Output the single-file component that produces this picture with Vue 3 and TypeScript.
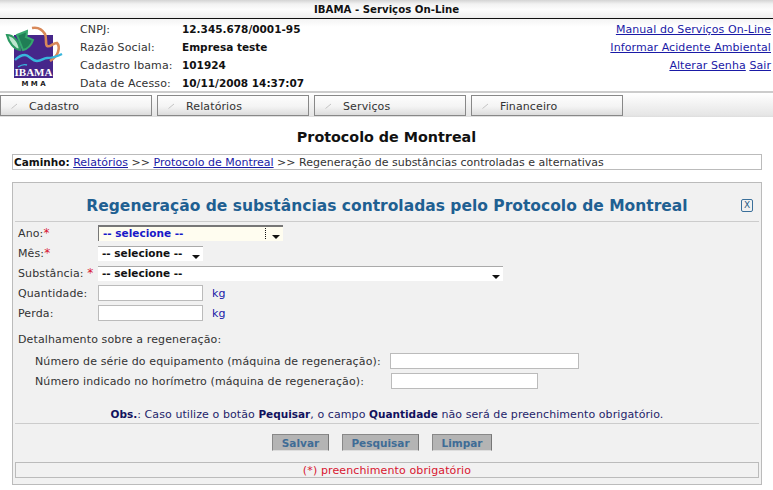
<script setup lang="ts">
const tabs = ['Cadastro', 'Relatórios', 'Serviços', 'Financeiro'];

const company = [
  { label: 'CNPJ:', value: '12.345.678/0001-95' },
  { label: 'Razão Social:', value: 'Empresa teste' },
  { label: 'Cadastro Ibama:', value: '101924' },
  { label: 'Data de Acesso:', value: '10/11/2008 14:37:07' },
];
</script>

<template>
  <div class="page">
    <div class="top-bar">IBAMA - Serviços On-Line</div>

    <!-- Header -->
    <div class="header">
      <svg class="logo" width="58" height="64" viewBox="0 0 58 64">
        <rect x="9" y="11" width="39" height="43" fill="#46268a" />
        <path d="M27 4c5-1 10 1 13 6 2 4 0 10 2 12 3 2 7-4 10-3 2 2 2 6 1 9-1 4-5 7-8 9" fill="none" stroke="#d8895a" stroke-width="2.6" />
        <path d="M2 11c6 0 12 6 13 15C9 25 4 19 2 11z" fill="#bfe6cf" stroke="#2c9a62" stroke-width="2.2" />
        <path d="M12 11l10-4c0 3 0 4-1 6l7 3c-2 6-6 9-10 10-2-5-4-10-6-15z" fill="#1f7d55" stroke="#35a86e" stroke-width="2" />
        <path d="M10 36c3-3 6-5 10-5 4 0 7 6 12 6s6-3 10-3 9-1 15-4" fill="none" stroke="#38b6dc" stroke-width="2.4" />
        <path d="M13 43c3-2 6-3 9-2" fill="none" stroke="#38b6dc" stroke-width="1.4" />
        <text x="28.5" y="52" class="logo-ibama" text-anchor="middle" textLength="38" lengthAdjust="spacingAndGlyphs">IBAMA</text>
        <text x="28.5" y="62" class="logo-mma" text-anchor="middle">M M A</text>
      </svg>

      <div class="company">
        <template v-for="row in company" :key="row.label">
          <span class="company-label">{{ row.label }}</span>
          <b class="company-value">{{ row.value }}</b>
        </template>
      </div>

      <div class="links">
        <a>Manual do Serviços On-Line</a>
        <a>Informar Acidente Ambiental</a>
        <div><a>Alterar Senha</a> <a>Sair</a></div>
      </div>
    </div>

    <!-- Menu -->
    <div class="menu">
      <div v-for="tab in tabs" :key="tab" class="tab">
        <svg class="tick" width="7" height="6" viewBox="0 0 7 6"><path d="M0.5 5.5L6 1" stroke="#c4c4c4" fill="none" /></svg>
        <span>{{ tab }}</span>
      </div>
    </div>

    <h1 class="page-title">Protocolo de Montreal</h1>

    <div class="breadcrumb">
      <b>Caminho:</b> <a>Relatórios</a> &gt;&gt; <a>Protocolo de Montreal</a> &gt;&gt; Regeneração de substâncias controladas e alternativas
    </div>

    <!-- Form panel -->
    <div class="panel">
      <div class="panel-head">
        <h2>Regeneração de substâncias controladas pelo Protocolo de Montreal</h2>
        <span class="close">X</span>
      </div>

      <div class="fields">
        <label>Ano:<i>*</i></label>
        <div class="select focused w-ano"><span>-- selecione --</span><em class="dots"></em><em class="arrow"></em></div>
        <label>Mês:<i>*</i></label>
        <div class="select w-mes"><span>-- selecione --</span><em class="arrow"></em></div>
        <label>Substância: <i>*</i></label>
        <div class="select w-sub"><span>-- selecione --</span><em class="arrow"></em></div>
        <label>Quantidade:</label>
        <div class="with-unit"><input class="field-input" type="text" /><span>kg</span></div>
        <label>Perda:</label>
        <div class="with-unit"><input class="field-input" type="text" /><span>kg</span></div>
      </div>

      <div class="details">
        <div class="details-title">Detalhamento sobre a regeneração:</div>
        <div class="details-row">
          <span class="serial-label">Número de série do equipamento (máquina de regeneração):</span>
          <input class="serial" type="text" />
        </div>
        <div class="details-row">
          <span class="meter-label">Número indicado no horímetro (máquina de regeneração):</span>
          <input class="meter" type="text" />
        </div>
      </div>

      <div class="obs">
        <b>Obs.</b>: Caso utilize o botão <b>Pequisar</b>, o campo <b>Quantidade</b> não será de preenchimento obrigatório.
      </div>

      <div class="actions">
        <button class="btn-save">Salvar</button>
        <button class="btn-search">Pesquisar</button>
        <button class="btn-clear">Limpar</button>
      </div>

      <div class="required-note">(*) preenchimento obrigatório</div>
    </div>
  </div>
</template>

<style>
html, body { background: #fff; }
</style>

<style scoped>
.page {
  width: 773px;
  height: 490px;
  overflow: hidden;
  font-family: "DejaVu Sans", Verdana, sans-serif;
  font-size: 11px;
  letter-spacing: 0.12px;
  color: #333;
}
b { font-size: 10.5px; letter-spacing: 0; }
a { color: #1a1aa6; text-decoration: underline; }

.top-bar {
  height: 18px;
  line-height: 20px;
  text-align: center;
  font-weight: bold;
  font-size: 10.2px;
  letter-spacing: 0;
  color: #111;
  background: linear-gradient(#d4d4d4 0, #f2f2f2 4px, #fdfdfd 10px, #eee 18px);
  border-bottom: 1px solid #111;
}

.header {
  height: 72px;
  display: flex;
  background: linear-gradient(#f4f4f4, #fff 8px);
}
.logo { margin: 5px 0 0 5px; flex-shrink: 0; }
.logo-ibama { font: bold 11px "Liberation Serif", serif; fill: #fff; letter-spacing: 0; }
.logo-mma { font: bold 7px "DejaVu Sans", sans-serif; fill: #222; letter-spacing: 0; }

.company {
  margin: 1px 0 0 17px;
  display: grid;
  grid-template-columns: 102px auto;
  grid-auto-rows: 18px;
  line-height: 18px;
}
.company-label { padding-top: 1px; }
.company-value { color: #111; }

.links {
  margin: 2px 2px 0 auto;
  display: flex;
  flex-direction: column;
  align-items: flex-end;
  line-height: 18px;
  letter-spacing: 0.08px;
}

.menu {
  height: 26px;
  padding-top: 2px;
  box-sizing: border-box;
  display: flex;
  gap: 5px;
  border-top: 2px solid #ccc;
  background: linear-gradient(#fff, #e6e6e6 22px, #ddd);
}
.tab {
  width: 152px;
  height: 21px;
  box-sizing: border-box;
  display: flex;
  align-items: center;
  gap: 11px;
  padding-left: 10px;
  border: 1px solid #888;
  background: linear-gradient(#fdfdfd, #f4f4f4 55%, #dcdcdc);
  color: #333;
}
.tab span { line-height: 17px; padding-top: 2px; }

.page-title {
  margin: 12px 0 0;
  height: 25px;
  line-height: 16px;
  text-align: center;
  font-size: 14.3px;
  font-weight: bold;
  letter-spacing: 0;
  color: #111;
}

.breadcrumb {
  margin-left: 12px;
  width: 750px;
  height: 16px;
  box-sizing: border-box;
  border: 1px solid #bbb;
  padding-left: 1px;
  line-height: 15px;
  white-space: nowrap;
  letter-spacing: 0;
}
.breadcrumb b { color: #111; }

.panel {
  margin: 12px 0 0 12px;
  width: 750px;
  height: 303px;
  box-sizing: border-box;
  border: 1px solid #bbb;
  background: #f1f1f1;
  padding: 0 2px;
}
.panel-head {
  height: 38px;
  position: relative;
  border-bottom: 1px solid #ccc;
}
.panel-head h2 {
  margin: 0;
  padding-top: 13px;
  text-align: center;
  font-size: 15.5px;
  line-height: 20px;
  font-weight: bold;
  letter-spacing: 0;
  color: #1f6092;
}
.close {
  position: absolute;
  right: 6px;
  top: 16px;
  width: 10px;
  height: 11px;
  border: 1px solid #3a6f9a;
  border-radius: 2px;
  font-size: 9px;
  letter-spacing: 0;
  line-height: 11px;
  text-align: center;
  color: #2c5f88;
}

.fields {
  padding: 1px 0 0 3px;
  display: grid;
  grid-template-columns: 80px 1fr;
  grid-auto-rows: 20px;
  align-items: center;
}
.fields i { color: #d81530; font-style: normal; font-size: 12px; }

.select {
  height: 15px;
  box-sizing: border-box;
  position: relative;
  background: #fff;
  border-top: 1px solid #aaa;
  padding-left: 4px;
  font-size: 10.5px;
  font-weight: bold;
  letter-spacing: 0;
  line-height: 12px;
  color: #111;
}
.select.focused {
  height: 16px;
  border-top: 2px solid #777;
  border-left: 1px solid #777;
  background: #fffdf0;
  color: #1818c8;
}
.w-ano { width: 185px; }
.w-mes { width: 105px; }
.w-sub { width: 405px; }
.arrow {
  position: absolute;
  right: 3px;
  top: 8px;
  border-left: 4px solid transparent;
  border-right: 4px solid transparent;
  border-top: 4px solid #111;
}
.dots {
  position: absolute;
  right: 17px;
  top: 1px;
  height: 11px;
  border-left: 1px dotted #111;
}

.with-unit { display: flex; align-items: center; gap: 9px; color: #1818a8; }
input {
  display: block;
  box-sizing: border-box;
  height: 16px;
  padding: 0;
  background: #fff;
  border: 1px solid #bbb;
  border-radius: 0;
}
.field-input { width: 105px; }

.details { padding: 8px 0 0 3px; }
.details-title { height: 20px; line-height: 18px; }
.details-row { height: 20px; display: flex; align-items: center; padding-left: 17px; }
.serial-label { width: 355px; }
.meter-label { width: 356px; }
.serial { width: 189px; }
.meter { width: 147px; }

.obs {
  margin-top: 15px;
  height: 17px;
  line-height: 17px;
  text-align: center;
  letter-spacing: 0.08px;
  color: #24246a;
  border-bottom: 1px solid #ccc;
}
.obs b { color: #12125e; }

.actions {
  height: 38px;
  display: flex;
  align-items: flex-start;
  padding: 10px 0 0 257px;
  box-sizing: border-box;
}
.actions button {
  height: 17px;
  padding: 0;
  font: bold 10.5px "DejaVu Sans", Verdana, sans-serif;
  color: #3f6c96;
  background: #b4b4b4;
  border: 1px solid;
  border-color: #888 #777 #ddd #888;
}
.btn-save { width: 57px; margin-right: 13px; }
.btn-search { width: 77px; margin-right: 13px; }
.btn-clear { width: 60px; }

.required-note {
  height: 16px;
  box-sizing: border-box;
  border: 1px solid #bbb;
  text-align: center;
  line-height: 15px;
  color: #d81530;
}
</style>
